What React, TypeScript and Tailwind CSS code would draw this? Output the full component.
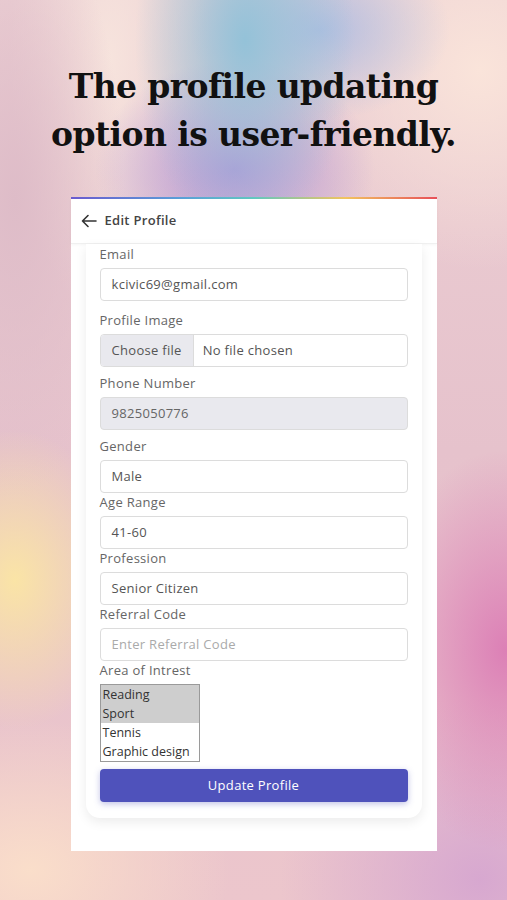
import React from "react";

const bg =
  "bg-[radial-gradient(ellipse_110px_200px_at_245px_40px,rgba(148,194,216,1),transparent),radial-gradient(ellipse_140px_110px_at_235px_170px,rgba(178,150,214,1),transparent),radial-gradient(ellipse_130px_90px_at_320px_30px,rgba(172,188,226,0.9),transparent),radial-gradient(ellipse_110px_150px_at_15px_580px,rgba(250,228,166,1),transparent),radial-gradient(ellipse_130px_200px_at_505px_650px,rgba(220,128,182,1),transparent),radial-gradient(ellipse_200px_180px_at_480px_880px,rgba(214,166,208,0.95),transparent),radial-gradient(ellipse_200px_150px_at_30px_870px,rgba(250,222,202,1),transparent),radial-gradient(ellipse_110px_300px_at_15px_200px,rgba(222,188,200,1),transparent),radial-gradient(ellipse_190px_200px_at_480px_70px,rgba(250,228,218,1),transparent),radial-gradient(ellipse_100px_260px_at_110px_60px,rgba(248,230,222,0.9),transparent),linear-gradient(180deg,#ecd0d4,#e6c2cc_50%,#ecc6cc)]";

function Field({
  label,
  children,
  className = "",
}: {
  label: string;
  children: React.ReactNode;
  className?: string;
}) {
  return (
    <div className={"flex flex-col " + className}>
      <div className="h-[19px] text-[13px] leading-[19px] tracking-[0.3px] text-[#666]">{label}</div>
      <div className="mt-[4px]">{children}</div>
    </div>
  );
}

function Box({ value, placeholder, gray }: { value?: string; placeholder?: string; gray?: boolean }) {
  return (
    <div
      className={
        "flex h-[33px] items-center rounded-[4px] border border-[#dcdcdc] px-[11px] text-[13px] tracking-[0.3px] " +
        (gray ? "bg-[#e9e9ee] text-[#666]" : "bg-white text-[#555]")
      }
    >
      {value ? <span>{value}</span> : <span className="text-[#aaa]">{placeholder}</span>}
    </div>
  );
}

export default function App() {
  return (
    <div className={"flex h-[900px] w-full flex-col items-center overflow-hidden " + bg}>
      <h1 className="mt-[63px] text-center font-['DejaVu_Serif',serif] text-[33px] font-bold leading-[48px] tracking-[-0.6px] text-[#111]">
        The profile updating
        <br />
        option is user-friendly.
      </h1>

      <div className="mt-[38px] flex h-[654px] w-[366px] flex-col bg-white font-['Open_Sans',sans-serif]">
        <div className="h-[2px] w-full bg-[linear-gradient(90deg,#6b5bd0,#5aa0d8_30%,#62c8c0_50%,#f2c460_75%,#e8505a)]" />
        <div className="flex h-[45px] items-center gap-[8px] border-b border-[#f0f0f0] px-[10px] shadow-[0_1px_3px_rgba(0,0,0,0.04)]">
          <svg width="16" height="14" viewBox="0 0 16 14" fill="none" stroke="#333" strokeWidth="1.6" strokeLinecap="round" strokeLinejoin="round">
            <path d="M15 7H1.5M7 1.5L1.5 7L7 12.5" />
          </svg>
          <span className="text-[13px] font-semibold tracking-[0.3px] text-[#444]">Edit Profile</span>
        </div>

        <div className="px-[15px]">
          <div className="flex flex-col rounded-b-[14px] bg-white px-[14px] pb-[16px] pt-[1px] shadow-[0_4px_12px_rgba(0,0,0,0.08)]">
            <Field label="Email">
              <Box value="kcivic69@gmail.com" />
            </Field>
            <Field label="Profile Image" className="mt-[10px]">
              <div className="flex h-[33px] overflow-hidden rounded-[4px] border border-[#dcdcdc] text-[13px] tracking-[0.3px] text-[#555]">
                <div className="flex items-center border-r border-[#dcdcdc] bg-[#e9e9ee] px-[11px]">Choose file</div>
                <div className="flex items-center px-[9px]">No file chosen</div>
              </div>
            </Field>
            <Field label="Phone Number" className="mt-[7px]">
              <Box value="9825050776" gray />
            </Field>
            <Field label="Gender" className="mt-[7px]">
              <Box value="Male" />
            </Field>
            <Field label="Age Range">
              <Box value="41-60" />
            </Field>
            <Field label="Profession">
              <Box value="Senior Citizen" />
            </Field>
            <Field label="Referral Code">
              <Box placeholder="Enter Referral Code" />
            </Field>
            <Field label="Area of Intrest">
              <div className="flex w-[100px] flex-col border border-[#9a9a9a] text-[12.5px] leading-[19px] text-[#333]">
                <div className="bg-[#cecece] px-[2px]">Reading</div>
                <div className="bg-[#cecece] px-[2px]">Sport</div>
                <div className="px-[2px]">Tennis</div>
                <div className="whitespace-nowrap px-[2px]">Graphic design</div>
              </div>
            </Field>
            <button className="mt-[7px] flex h-[33px] items-center justify-center rounded-[4px] bg-[#4f52bb] text-[13px] tracking-[0.3px] text-white shadow-[0_2px_6px_rgba(80,82,187,0.35)]">
              Update Profile
            </button>
          </div>
        </div>
      </div>
    </div>
  );
}
